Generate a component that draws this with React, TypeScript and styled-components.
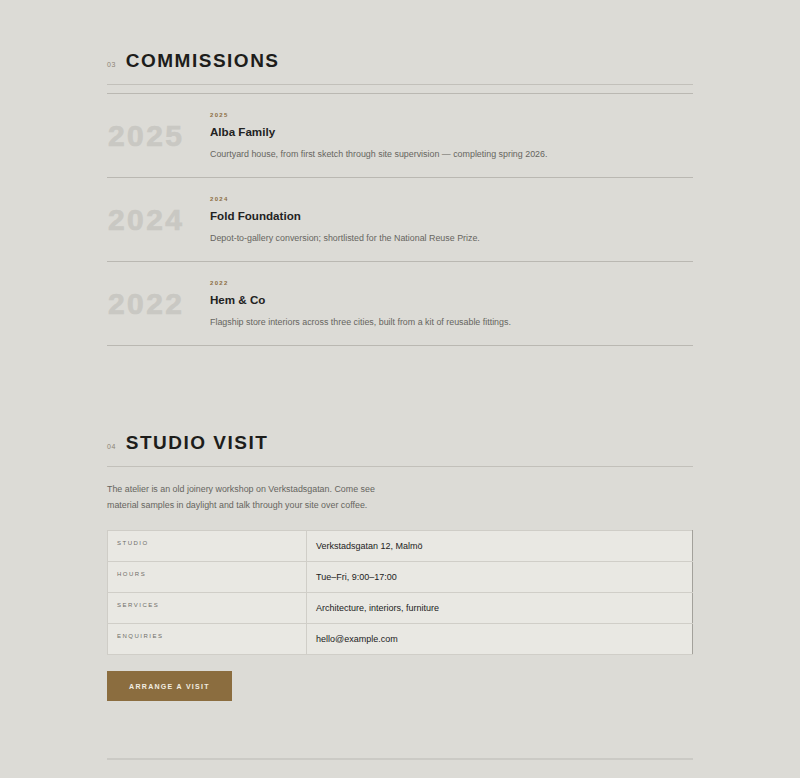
import React, { FC } from "react"
import styled, { createGlobalStyle } from "styled-components"

const GlobalStyle = createGlobalStyle`
  html, body {
    margin: 0;
    padding: 0;
    background: #dcdbd6;
  }
  body {
    font-family: "Liberation Sans", Arial, sans-serif;
    color: #222;
  }
`

const Page = styled.div`
  width: 586px;
  margin: 0 auto;
`

const Section = styled.section<{ $top: number, $bottom: number }>`
  padding: ${ p => p.$top }px 0 ${ p => p.$bottom }px;
`

const HeadingRow = styled.div`
  display: flex;
  align-items: baseline;
  gap: 10px;
  padding-bottom: 12px;
  border-bottom: 1px solid #c2c0ba;
`

const Index = styled.span`
  font-size: 7px;
  color: #8c8475;
  letter-spacing: 0.5px;
`

const Heading = styled.h2`
  margin: 0;
  font-size: 19px;
  line-height: 23px;
  font-weight: bold;
  letter-spacing: 1.5px;
  color: #1d1d1b;
`

const List = styled.ul`
  list-style: none;
  margin: 8px 0 0;
  padding: 0;
  border-top: 1px solid #bab8b2;
`

const Row = styled.li`
  display: grid;
  grid-template-columns: 103px 1fr;
  align-items: center;
  padding: 17px 0 16px;
  border-bottom: 1px solid #bab8b2;
`

const BigYear = styled.div`
  padding-left: 1px;
  font-size: 30px;
  font-weight: bold;
  letter-spacing: 2.4px;
  color: #c9c8c3;
  line-height: 1;
  -webkit-text-stroke: 0.7px #c9c8c3;
`

const Body = styled.div`
  display: flex;
  flex-direction: column;
`

const SmallYear = styled.span`
  font-size: 6px;
  line-height: 8px;
  letter-spacing: 1.3px;
  font-weight: bold;
  color: #8b6d3f;
`

const Title = styled.h3`
  margin: 5px 0 0;
  font-size: 11.6px;
  line-height: 15px;
  font-weight: bold;
  color: #222;
`

const Desc = styled.p`
  margin: 8px 0 0;
  font-size: 8.9px;
  line-height: 14px;
  color: #666560;
`

const Intro = styled.p`
  margin: 14px 0 0;
  max-width: 280px;
  font-size: 8.9px;
  line-height: 16px;
  color: #666560;
`

const Table = styled.table`
  width: 100%;
  margin-top: 17px;
  border-collapse: collapse;
  background: #e9e8e3;
  border: 1px solid;
  border-color: #cfcdc7 #a3a19b #a3a19b #cfcdc7;
`

const Cell = styled.td`
  height: 30px;
  padding: 0 9px;
  border-bottom: 1px solid #d0cec8;
  vertical-align: middle;
`

const LabelCell = styled(Cell)`
  width: 180px;
  border-right: 1px solid #d0cec8;
  vertical-align: top;
  padding-top: 9px;
  height: 21px;
  font-size: 6px;
  line-height: 6px;
  letter-spacing: 1.5px;
  text-transform: uppercase;
  color: #6f6d68;
`

const ValueCell = styled(Cell)`
  font-size: 9px;
  color: #222;
`

const Button = styled.button`
  display: block;
  margin-top: 16px;
  width: 125px;
  height: 30px;
  border: 0;
  background: #8b6d3f;
  color: #f2ede2;
  font-family: inherit;
  font-size: 7px;
  font-weight: bold;
  letter-spacing: 1.3px;
  text-transform: uppercase;
  cursor: pointer;
`

const Footer = styled.div`
  border-top: 2px solid #cbcac5;
  height: 20px;
`

const commissions = [
  { year: "2025", title: "Alba Family", text: "Courtyard house, from first sketch through site supervision — completing spring 2026." },
  { year: "2024", title: "Fold Foundation", text: "Depot-to-gallery conversion; shortlisted for the National Reuse Prize." },
  { year: "2022", title: "Hem & Co", text: "Flagship store interiors across three cities, built from a kit of reusable fittings." }
]

const details = [
  { label: "Studio", value: "Verkstadsgatan 12, Malmö" },
  { label: "Hours", value: "Tue–Fri, 9:00–17:00" },
  { label: "Services", value: "Architecture, interiors, furniture" },
  { label: "Enquiries", value: "hello@example.com" }
]

const SectionHeading: FC<{ index: string, title: string }> = ({ index, title }) => (
  <HeadingRow>
    <Index>{ index }</Index>
    <Heading>{ title }</Heading>
  </HeadingRow>
)

const App: FC = () => (
  <>
    <GlobalStyle />
    <Page>
      <Section $top={ 49 } $bottom={ 36 }>
        <SectionHeading index="03" title="COMMISSIONS" />
        <List>
          { commissions.map(({ year, title, text }) => (
            <Row key={ year }>
              <BigYear>{ year }</BigYear>
              <Body>
                <SmallYear>{ year }</SmallYear>
                <Title>{ title }</Title>
                <Desc>{ text }</Desc>
              </Body>
            </Row>
          )) }
        </List>
      </Section>
      <Section $top={ 49 } $bottom={ 57 }>
        <SectionHeading index="04" title="STUDIO VISIT" />
        <Intro>
          The atelier is an old joinery workshop on Verkstadsgatan. Come see material samples in daylight and talk through your site over coffee.
        </Intro>
        <Table>
          <tbody>
            { details.map(({ label, value }) => (
              <tr key={ label }>
                <LabelCell>{ label }</LabelCell>
                <ValueCell>{ value }</ValueCell>
              </tr>
            )) }
          </tbody>
        </Table>
        <Button>Arrange a visit</Button>
      </Section>
      <Footer />
    </Page>
  </>
)

export default App
